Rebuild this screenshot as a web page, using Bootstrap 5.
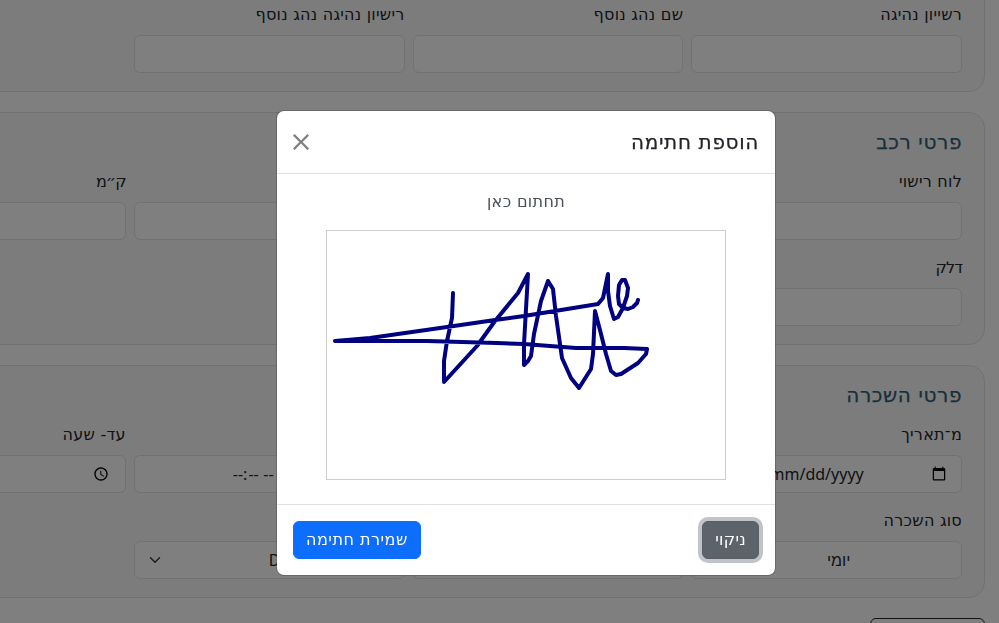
<!DOCTYPE html>
<html lang="he" dir="rtl">
<head>
<meta charset="utf-8">
<title>הוספת חתימה</title>
<link href="https://cdn.jsdelivr.net/npm/bootstrap@5.3.0/dist/css/bootstrap.min.css" rel="stylesheet">
<style>
html,body{height:100%;overflow:hidden}
body{font-family:"DejaVu Sans",sans-serif}
.page-wrap{padding-right:14px;margin-top:-55px}
.form-panel{width:1153px;background:#f8f9fb;border:1px solid #dee2e6;border-radius:16px;padding:17px 22px 2px;margin-bottom:20px}
.panel-title{font-size:20px;line-height:24px;font-weight:500;color:#2f6076;letter-spacing:.6px;-webkit-text-stroke:.25px #2f6076;margin:0 0 16px}
.field-label{letter-spacing:.25px;line-height:24px}
.field-label-tight{letter-spacing:-.9px}
.form-control,.form-select{text-align:center;font-family:system-ui,"Noto Sans",sans-serif}
.form-select{background-position:left .75rem center;padding:.375rem .75rem .375rem 2.25rem}
.sig-dialog{margin:110px 223px 0 auto;width:500px;max-width:500px}
.sig-title{font-size:20px;line-height:30px;font-weight:500;letter-spacing:.65px;-webkit-text-stroke:.25px #212529}
.sig-hint{text-align:center;margin-bottom:16px;color:#495057;letter-spacing:.35px}
.sig-pad{display:block;width:400px;height:250px;margin:0 auto 8px;border:1px solid #ccc;background:#fff}
.clear-btn,.clear-btn:hover{background:#5c636a;border-color:#565e64;color:#fff;letter-spacing:.3px;box-shadow:0 0 0 .25rem rgba(130,138,145,.5)}
.save-btn{letter-spacing:.5px}
.modal-header .sig-close{margin:0 auto 0 -1px;padding:0;width:18px;height:18px;background-size:18px}
.add-btn{width:115px}
</style>
</head>
<body>
<div class="page-wrap">
  <section class="form-panel">
    <h5 class="panel-title">פרטי נהג</h5>
    <div class="row gx-2">
      <div class="col-3 mb-3"><label class="field-label mb-2 d-block">רשייון נהיגה</label><input class="form-control" type="text"></div>
      <div class="col-3 mb-3"><label class="field-label mb-2 d-block">שם נהג נוסף</label><input class="form-control" type="text"></div>
      <div class="col-3 mb-3"><label class="field-label mb-2 d-block">רישיון נהיגה נהג נוסף</label><input class="form-control" type="text"></div>
    </div>
  </section>
  <section class="form-panel">
    <h5 class="panel-title">פרטי רכב</h5>
    <div class="row gx-2">
      <div class="col-3 mb-3"><label class="field-label mb-2 d-block">לוח רישוי</label><input class="form-control" type="text"></div>
      <div class="col-3 mb-3"><label class="field-label mb-2 d-block">יצרן</label><input class="form-control" type="text"></div>
      <div class="col-3 mb-3"><label class="field-label mb-2 d-block">דגם</label><input class="form-control" type="text"></div>
      <div class="col-3 mb-3"><label class="field-label field-label-tight mb-2 d-block">ק״מ</label><input class="form-control" type="text"></div>
      <div class="col-3 mb-3"><label class="field-label field-label-tight mb-2 d-block">דלק</label><input class="form-control" type="text"></div>
    </div>
  </section>
  <section class="form-panel">
    <h5 class="panel-title">פרטי השכרה</h5>
    <div class="row gx-2">
      <div class="col-3 mb-3"><label class="field-label mb-2 d-block">מ־תאריך</label><input class="form-control" type="date"></div>
      <div class="col-3 mb-3"><label class="field-label mb-2 d-block">עד־תאריך</label><input class="form-control" type="date"></div>
      <div class="col-3 mb-3"><label class="field-label mb-2 d-block">מ־שעה</label><input class="form-control" type="time"></div>
      <div class="col-3 mb-3"><label class="field-label mb-2 d-block">עד- שעה</label><input class="form-control" type="time"></div>
      <div class="col-3 mb-3"><label class="field-label mb-2 d-block">סוג השכרה</label><select class="form-select"><option>יומי</option></select></div>
      <div class="col-3 mb-3"><label class="field-label mb-2 d-block">מחיר</label><input class="form-control" type="text"></div>
      <div class="col-3 mb-3"><label class="field-label mb-2 d-block">מטבע</label><select class="form-select"><option>Dal</option></select></div>
    </div>
  </section>
  <button type="button" class="btn btn-outline-dark d-block add-btn">הוספה</button>
</div>

<div class="modal-backdrop show"></div>
<div class="modal d-block" tabindex="-1">
  <div class="modal-dialog sig-dialog">
    <div class="modal-content">
      <div class="modal-header">
        <h5 class="modal-title sig-title">הוספת חתימה</h5>
        <button type="button" class="btn-close sig-close" aria-label="Close"></button>
      </div>
      <div class="modal-body">
        <p class="sig-hint">תחתום כאן</p>
        <svg class="sig-pad" viewBox="326 230 398 248" xmlns="http://www.w3.org/2000/svg">
          <path fill="none" stroke="#000080" stroke-width="4" stroke-linecap="round" stroke-linejoin="round"
            d="M452 292L451 317L446 340L443 360L443 381L476 345L494 320L517 292L527 273L523 343L523 364L527 360L530 355L533 333L540 300L547 280L552 288L555 315L561 357L570 377L578 387L590 368L592 353L594 310L600 333L605 353L610 370L615 374L620 373L637 362L645 353L646 348L623 347L575 347L523 343L496 342L426 340L334 340L369 337L446 326L494 319L523 315L597 303L602 297L607 273L607 290L609 305L613 318L617 316L622 307L626 295L627 287L624 279L621 279L618 284L617 295L618 303L622 307L627 308L632 306L636 302L637 299"/>
        </svg>
      </div>
      <div class="modal-footer justify-content-between">
        <button type="button" class="btn clear-btn">ניקוי</button>
        <button type="button" class="btn btn-primary save-btn">שמירת חתימה</button>
      </div>
    </div>
  </div>
</div>
<script src="https://cdn.jsdelivr.net/npm/bootstrap@5.3.0/dist/js/bootstrap.bundle.min.js"></script>
</body>
</html>
